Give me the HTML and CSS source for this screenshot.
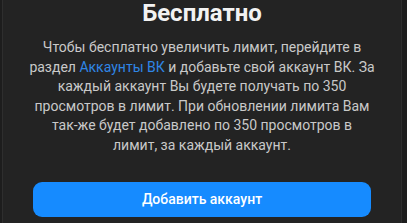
FILE: index.html
```html
<!DOCTYPE html>
<html lang="ru">
<head>
<meta charset="utf-8">
<link rel="stylesheet" href="styles.css">
</head>
<body>
<div class="card">
  <h2 class="title">Бесплатно</h2>
  <p class="text">Чтобы бесплатно увеличить лимит, перейдите в раздел <a class="link" href="#">Аккаунты ВК</a> и добавьте свой аккаунт ВК. За каждый аккаунт Вы будете получать по 350 просмотров в лимит. При обновлении лимита Вам так-же будет добавлено по 350 просмотров в лимит, за каждый аккаунт.</p>
  <button class="btn">Добавить аккаунт</button>
</div>
</body>
</html>
```
FILE: styles.css
```css
html, body {
  margin: 0;
  padding: 0;
  height: 100%;
  background: #1d1d1d;
  overflow: hidden;
}
body {
  font-family: Roboto, "Noto Sans", sans-serif;
  -webkit-font-smoothing: antialiased;
}
.card {
  margin: 0 5px 0 2px;
  min-height: 100%;
  box-sizing: border-box;
  background: #232323;
  border-left: 1px solid #2e2e2e;
  border-right: 1px solid #2e2e2e;
  padding: 0 30px;
  display: flex;
  flex-direction: column;
  align-items: center;
}
.title {
  margin: 1px 0 0;
  font-size: 24px;
  line-height: 24px;
  font-weight: 700;
  color: #f2f2f2;
  text-align: center;
}
.text {
  margin: 13px -4px 0;
  font-size: 14px;
  line-height: 19.6px;
  color: #c9c9c9;
  text-align: center;
}
.link {
  color: #2f86e6;
  text-decoration: none;
}
.btn {
  margin-top: 26px;
  width: 100%;
  height: 35px;
  border: 0;
  border-radius: 9px;
  background: #168bff;
  color: #ffffff;
  font-family: Roboto, "Noto Sans", sans-serif;
  font-size: 14px;
  font-weight: 500;
}
```
